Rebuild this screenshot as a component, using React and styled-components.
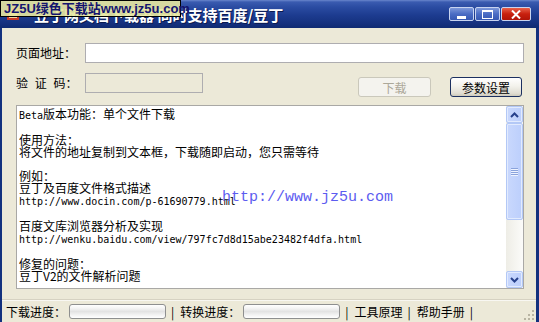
import React from 'react';
import styled, { createGlobalStyle } from 'styled-components';

const GlobalStyle = createGlobalStyle`
  html, body {
    margin: 0;
    padding: 0;
    background: #ece9d8;
  }
  body {
    font-family: "Noto Sans CJK SC", "Liberation Sans", sans-serif;
    font-size: 12px;
    color: #000;
  }
`;

const Window = styled.div`
  position: relative;
  width: 539px;
  height: 322px;
  display: flex;
  flex-direction: column;
  overflow: hidden;
  background: #ece9d8;
`;

const TitleBar = styled.div`
  position: relative;
  height: 28px;
  flex: none;
  display: flex;
  align-items: center;
  padding: 0 8px 0 5px;
  background: linear-gradient(#6a86cc 0, #3a5bb0 2px, #2b4ca2 7px, #1d3c90 15px, #15317f 23px, #0f2a72 28px);
`;

const AppIcon = styled.svg`
  width: 16px;
  height: 16px;
  flex: none;
`;

const TitleText = styled.span`
  margin-left: 13px;
  color: #fff;
  font-size: 15px;
  font-weight: bold;
  white-space: nowrap;
  text-shadow: 1px 1px 0 #0a1a50;
`;

const Watermark = styled.div`
  position: absolute;
  left: 0;
  top: 0;
  width: 181px;
  height: 17px;
  box-sizing: border-box;
  border: 1px solid #000;
  background: rgba(232, 232, 160, 0.9);
  color: #14146e;
  font-family: "Liberation Sans", "Noto Sans CJK SC", sans-serif;
  font-weight: bold;
  font-size: 13px;
  line-height: 15px;
  padding-left: 3px;
  white-space: nowrap;
`;

const Controls = styled.div`
  margin-left: auto;
  display: flex;
  gap: 1px;
`;

const CtrlButton = styled.div`
  width: ${(p) => (p.$close ? 30 : 25)}px;
  height: 14px;
  box-sizing: border-box;
  border: 1px solid #c8d4f0;
  border-radius: 2px;
  display: flex;
  align-items: center;
  justify-content: center;
  background: ${(p) =>
    p.$close
      ? 'linear-gradient(#e8604a, #c8200e 50%, #b01408)'
      : 'linear-gradient(#7d98da, #4a6cc4 50%, #3658b2)'};
`;

const Frame = styled.div`
  flex: 1;
  display: flex;
  flex-direction: column;
  border-left: 2px solid #13317e;
  border-right: 3px solid #13317e;
  min-height: 0;
`;

const Content = styled.div`
  padding: 15px 12px 0 14px;
  display: flex;
  flex-direction: column;
`;

const Row = styled.div`
  display: flex;
  align-items: flex-start;
  margin-top: ${(p) => p.$gap || 0}px;
`;

const Label = styled.label`
  width: 69px;
  flex: none;
  height: 20px;
  line-height: 20px;
  white-space: pre;
  word-spacing: ${(p) => p.$spread || 0}px;
`;

const TextInput = styled.div`
  height: 20px;
  box-sizing: border-box;
  border: 1px solid #aeadb0;
  background: ${(p) => (p.$disabled ? '#ece9d8' : '#fff')};
  width: ${(p) => (p.$width ? `${p.$width}px` : 'auto')};
  flex: ${(p) => (p.$width ? 'none' : 1)};
`;

const Buttons = styled.div`
  margin: 4px 2px 0 auto;
  display: flex;
  gap: 19px;
`;

const Button = styled.div`
  width: ${(p) => p.$width}px;
  height: 20px;
  box-sizing: border-box;
  border-radius: 3px;
  display: flex;
  align-items: center;
  justify-content: center;
  border: 1px solid ${(p) => (p.$disabled ? '#cac8bb' : '#1c3060')};
  color: ${(p) => (p.$disabled ? '#aca899' : '#000')};
  background: ${(p) =>
    p.$disabled ? '#f4f3ee' : 'linear-gradient(#ffffff, #f3f2ec 45%, #e0ddd2 85%, #cdc9bb)'};
`;

const TextBox = styled.div`
  position: relative;
  margin-top: 8px;
  height: 184px;
  box-sizing: border-box;
  border: 1px solid #a9a8a5;
  background: #fff;
  display: flex;
`;

const TextBody = styled.div`
  flex: 1;
  padding: 2px 0 0 2px;
  line-height: 12px;
  font-size: 12px;
  white-space: pre;
  overflow: hidden;
`;

const Mono = styled.span`
  font-family: "DejaVu Sans Mono", "Liberation Mono", monospace;
  font-size: 10px;
`;

const SiteMark = styled.div`
  position: absolute;
  left: 205px;
  top: 83px;
  font-family: "Liberation Mono", monospace;
  font-size: 15px;
  color: #5c5cf0;
  white-space: nowrap;
`;

const Scrollbar = styled.div`
  width: 17px;
  flex: none;
  display: flex;
  flex-direction: column;
  background: linear-gradient(to right, #eeede6, #fbfbf9);
`;

const ScrollPart = styled.div`
  height: ${(p) => p.$h}px;
  flex: none;
  box-sizing: border-box;
  border: 1px solid #b3c8f6;
  border-radius: 2px;
  box-shadow: inset 0 0 0 1px #e2ebfe;
  background: linear-gradient(to right, #c9d8fd, #bccffc);
  display: flex;
  align-items: center;
  justify-content: center;
`;

const Track = styled.div`
  flex: 1;
`;

const Grip = styled.div`
  display: flex;
  flex-direction: column;
  gap: 1px;
  & > span {
    display: block;
    width: 7px;
    height: 1px;
    background: #8aa3dc;
    box-shadow: 0 1px 0 #eef3ff;
  }
`;

const StatusBar = styled.div`
  margin-top: auto;
  height: 23px;
  box-sizing: border-box;
  border-top: 1px solid #d6d2c2;
  box-shadow: inset 0 1px 0 #f8f7f2;
  display: flex;
  align-items: center;
  padding-left: 4px;
  position: relative;
  white-space: nowrap;
`;

const Progress = styled.div`
  width: 97px;
  height: 15px;
  box-sizing: border-box;
  margin-left: 3px;
  border: 1px solid #8e8f8f;
  border-radius: 3px;
  background: linear-gradient(#ffffff 0, #f4f4f4 25%, #e3e3e3 50%, #f2f2f2 75%, #ffffff 100%);
`;

const Sep = styled.span`
  margin: 0 6px 0 5px;
`;

const SizeGrip = styled.svg`
  position: absolute;
  right: 2px;
  bottom: 2px;
`;

function ChevronUp() {
  return (
    <svg width="9" height="6" viewBox="0 0 9 6">
      <path d="M1 5 L4.5 1.5 L8 5" stroke="#27418c" strokeWidth="2" fill="none" />
    </svg>
  );
}

function ChevronDown() {
  return (
    <svg width="9" height="6" viewBox="0 0 9 6">
      <path d="M1 1 L4.5 4.5 L8 1" stroke="#27418c" strokeWidth="2" fill="none" />
    </svg>
  );
}

export default function App() {
  return (
    <>
      <GlobalStyle />
      <Window>
        <TitleBar>
          <AppIcon viewBox="0 0 16 16">
            <rect x="2" y="2" width="12" height="12" fill="#c83a28" />
            <rect x="4" y="4" width="8" height="8" fill="#f2d9a0" />
          </AppIcon>
          <TitleText>豆丁网文档下载器 同时支持百度/豆丁</TitleText>
          <Watermark>JZ5U绿色下载站www.jz5u.com</Watermark>
          <Controls>
            <CtrlButton>
              <svg width="9" height="9" viewBox="0 0 9 9">
                <rect x="0" y="6" width="9" height="3" fill="#fff" />
              </svg>
            </CtrlButton>
            <CtrlButton>
              <svg width="11" height="9" viewBox="0 0 11 9">
                <rect x="0.5" y="0.5" width="10" height="8" fill="none" stroke="#fff" />
                <rect x="0" y="0" width="11" height="2" fill="#fff" />
              </svg>
            </CtrlButton>
            <CtrlButton $close>
              <svg width="10" height="9" viewBox="0 0 10 9">
                <path d="M1 0.5 L9 8.5 M9 0.5 L1 8.5" stroke="#fff" strokeWidth="2" />
              </svg>
            </CtrlButton>
          </Controls>
        </TitleBar>

        <Frame>
          <Content>
            <Row>
              <Label>页面地址：</Label>
              <TextInput />
            </Row>
            <Row $gap={10}>
              <Label $spread={4}>验 证 码：</Label>
              <TextInput $disabled $width={118} />
              <Buttons>
                <Button $disabled $width={73}>下载</Button>
                <Button $width={72}>参数设置</Button>
              </Buttons>
            </Row>
            <TextBox>
              <TextBody>
                <Mono>Beta</Mono>版本功能：单个文件下载{'\n'}
                {'\n'}
                使用方法：{'\n'}
                将文件的地址复制到文本框，下载随即启动，您只需等待{'\n'}
                {'\n'}
                例如：{'\n'}
                豆丁及百度文件格式描述{'\n'}
                <Mono>http://www.docin.com/p-61690779.html</Mono>{'\n'}
                {'\n'}
                百度文库浏览器分析及实现{'\n'}
                <Mono>http://wenku.baidu.com/view/797fc7d8d15abe23482f4dfa.html</Mono>{'\n'}
                {'\n'}
                修复的问题：{'\n'}
                豆丁V2的文件解析问题
              </TextBody>
              <SiteMark>http://www.jz5u.com</SiteMark>
              <Scrollbar>
                <ScrollPart $h={17}>
                  <ChevronUp />
                </ScrollPart>
                <ScrollPart $h={97}>
                  <Grip>
                    <span />
                    <span />
                    <span />
                    <span />
                  </Grip>
                </ScrollPart>
                <Track />
                <ScrollPart $h={17}>
                  <ChevronDown />
                </ScrollPart>
              </Scrollbar>
            </TextBox>
          </Content>

          <StatusBar>
            <span>下载进度：</span>
            <Progress />
            <Sep>|</Sep>
            <span>转换进度：</span>
            <Progress />
            <Sep>|</Sep>
            <span>工具原理</span>
            <Sep>|</Sep>
            <span>帮助手册</span>
            <Sep>|</Sep>
            <SizeGrip width="11" height="11" viewBox="0 0 11 11">
              {[[9, 1], [9, 5], [5, 5], [9, 9], [5, 9], [1, 9]].map(([x, y]) => (
                <rect key={`${x}-${y}`} x={x} y={y} width="2" height="2" fill="#b8b4a2" />
              ))}
            </SizeGrip>
          </StatusBar>
        </Frame>
      </Window>
    </>
  );
}
